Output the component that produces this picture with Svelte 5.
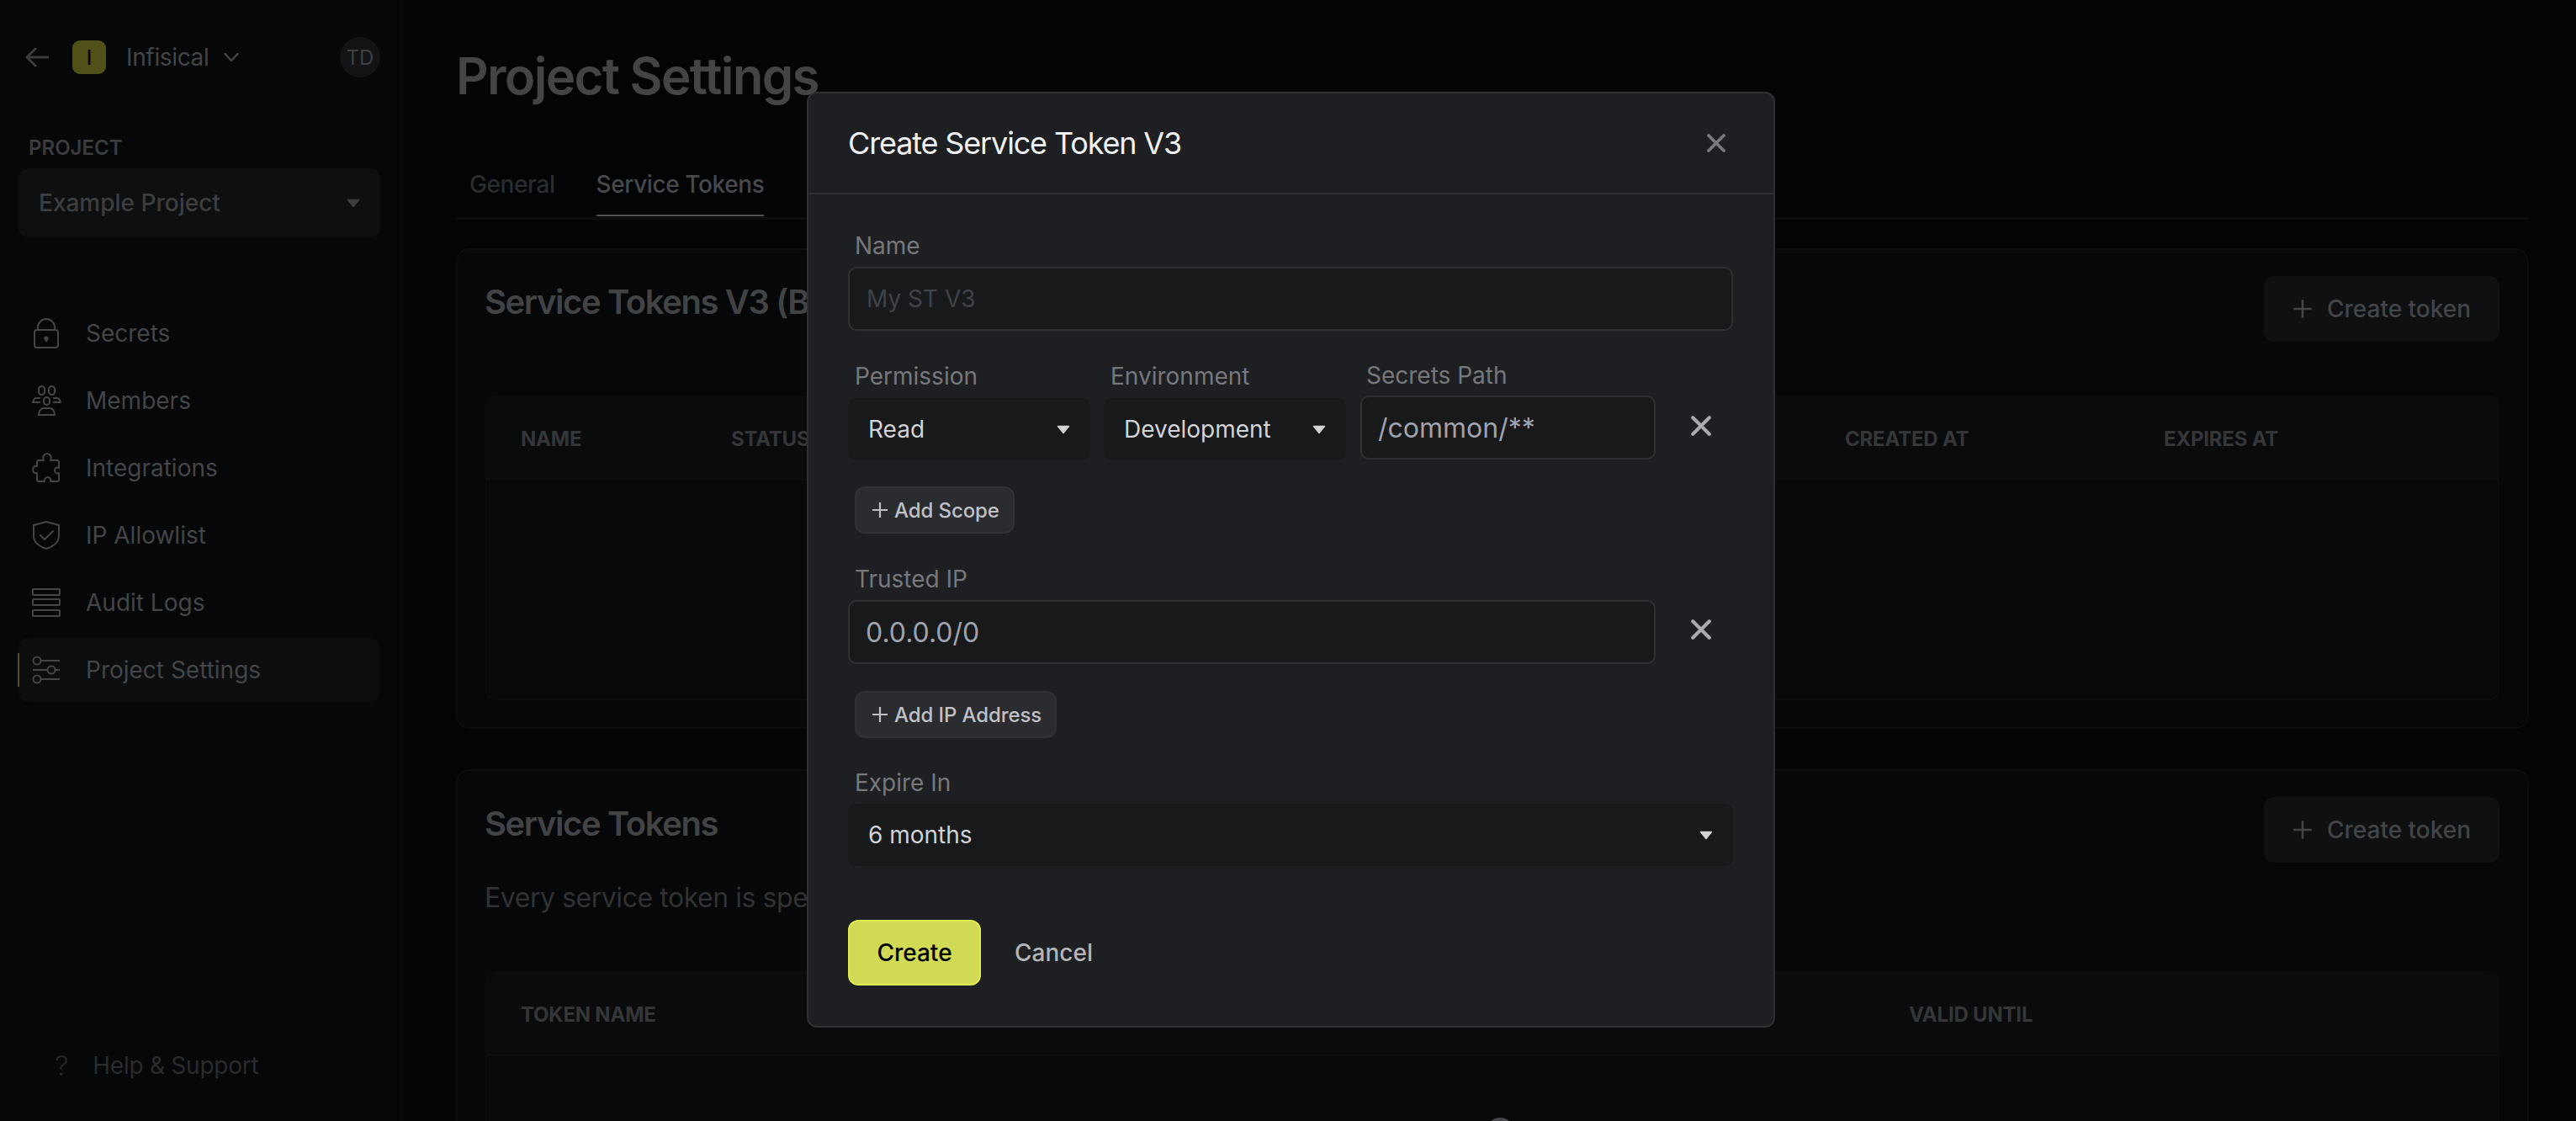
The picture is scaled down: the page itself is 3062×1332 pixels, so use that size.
<script lang="ts">
  const navItems = [
    { label: 'Secrets', icon: 'lock' },
    { label: 'Members', icon: 'users' },
    { label: 'Integrations', icon: 'puzzle' },
    { label: 'IP Allowlist', icon: 'shield' },
    { label: 'Audit Logs', icon: 'rows' },
    { label: 'Project Settings', icon: 'sliders', active: true }
  ];
</script>

{#snippet caret()}
  <svg class="caret" viewBox="0 0 16 11"><path d="M1.5 1.5h13L8 9.5z" fill="currentColor" stroke="currentColor" stroke-width="1.5" stroke-linejoin="round" /></svg>
{/snippet}

{#snippet plus(cls)}
  <svg class={cls} viewBox="0 0 20 20"><path d="M10 1v18M1 10h18" stroke="currentColor" stroke-width="2.2" fill="none" /></svg>
{/snippet}

{#snippet cross(cls)}
  <svg class={cls} viewBox="0 0 20 20"><path d="M2.5 2.5l15 15M17.5 2.5l-15 15" stroke="currentColor" stroke-width="3.2" stroke-linecap="round" fill="none" /></svg>
{/snippet}

<div class="page">
  <aside class="sidebar">
    <div class="org-row">
      <svg class="back" viewBox="0 0 28 24"><path d="M27 12H3M12 2L2 12l10 10" stroke="currentColor" stroke-width="3" fill="none" stroke-linecap="round" stroke-linejoin="round" /></svg>
      <span class="org-logo">I</span>
      <span class="org-name">Infisical</span>
      <svg class="org-chevron" viewBox="0 0 18 12"><path d="M1.5 2L9 10l7.5-8" stroke="currentColor" stroke-width="2.4" fill="none" stroke-linecap="round" stroke-linejoin="round" /></svg>
      <span class="avatar">TD</span>
    </div>

    <div class="project-label">PROJECT</div>
    <div class="project-select">
      <span>Example Project</span>
      {@render caret()}
    </div>

    <nav class="nav">
      {#each navItems as item}
        <div class="nav-item" class:active={item.active}>
          <svg class="nav-icon" viewBox="0 0 36 36" fill="none" stroke="currentColor" stroke-width="2">
            {#if item.icon === 'lock'}
              <rect x="4" y="14" width="28" height="21" rx="3" />
              <path d="M8 14v-3a10 10 0 0 1 20 0v3" />
              <path d="M18 24v3" stroke-width="2.6" stroke-linecap="round" />
              <circle cx="18" cy="24" r="1.6" fill="currentColor" />
            {:else if item.icon === 'users'}
              <rect x="9" y="1" width="7" height="10" rx="3.5" />
              <rect x="21" y="1" width="7" height="10" rx="3.5" />
              <rect x="15" y="14" width="7" height="9" rx="3.5" />
              <path d="M11 15H6c-2 0-3 2-4 5h9" />
              <path d="M26 15h5c2 0 3 2 4 5h-9" />
              <path d="M9 35c0-5 3-8 6-8h7c3 0 6 3 6 8z" />
            {:else if item.icon === 'puzzle'}
              <path d="M15 9c-2-5 1-8 4-8s6 3 4 8h8c1 0 2 1 2 2v7c-3-1-5 0-5 3s2 4 5 3v8c0 1-1 2-2 2h-8c1-3-1-5-3-5s-5 2-4 5H9c-1 0-2-1-2-2v-8c-3 1-5-1-5-4s2-5 5-4v-5c0-1 1-2 2-2z" stroke-linejoin="round" />
            {:else if item.icon === 'shield'}
              <path d="M18 2l15 4v13c0 8-8 13-15 15C11 32 3 27 3 19V6z" stroke-linejoin="round" />
              <path d="M11 18l5 5 10-10" stroke-linecap="round" stroke-linejoin="round" />
            {:else if item.icon === 'rows'}
              <rect x="2" y="2" width="32" height="7" rx="1" />
              <rect x="2" y="14" width="32" height="7" rx="1" />
              <rect x="2" y="27" width="32" height="7" rx="1" />
            {:else}
              <path d="M12 7h22M2 18h17M29 18h5M12 29h22" />
              <circle cx="7" cy="7" r="4.5" />
              <circle cx="24" cy="18" r="4.5" />
              <circle cx="7" cy="29" r="4.5" />
            {/if}
          </svg>
          <span>{item.label}</span>
        </div>
      {/each}
    </nav>

    <div class="help">
      <span class="help-mark">?</span>
      <span>Help &amp; Support</span>
    </div>
  </aside>

  <main class="main">
    <h1>Project Settings</h1>
    <div class="tabs">
      <span class="tab">General</span>
      <span class="tab current">Service Tokens</span>
    </div>

    <section class="card first">
      <div class="card-head">
        <h2>Service Tokens V3 (Beta)</h2>
        <div class="create-btn">{@render plus('create-plus')}<span>Create token</span></div>
      </div>
      <div class="table tall">
        <div class="thead">
          <span style="left: 40px">NAME</span>
          <span style="left: 290px">STATUS</span>
          <span style="left: 1614px">CREATED AT</span>
          <span style="left: 1993px">EXPIRES AT</span>
        </div>
      </div>
    </section>

    <section class="card second">
      <div class="card-head">
        <h2>Service Tokens</h2>
        <div class="create-btn">{@render plus('create-plus')}<span>Create token</span></div>
      </div>
      <p class="card-desc">Every service token is specific to a project and environment.</p>
      <div class="table">
        <div class="thead">
          <span style="left: 40px">TOKEN NAME</span>
          <span style="left: 1690px">VALID UNTIL</span>
        </div>
        <div class="spinner"></div>
      </div>
    </section>
  </main>

  <div class="modal">
    <header class="modal-head">
      <span class="modal-title">Create Service Token V3</span>
      {@render cross('modal-close')}
    </header>

    <div class="modal-body">
      <label class="field-label">Name</label>
      <div class="input placeholder">My ST V3</div>

      <div class="scope-row">
        <div class="scope-col perm">
          <label class="field-label">Permission</label>
          <div class="select"><span>Read</span>{@render caret()}</div>
        </div>
        <div class="scope-col env">
          <label class="field-label">Environment</label>
          <div class="select"><span>Development</span>{@render caret()}</div>
        </div>
        <div class="scope-col path">
          <label class="field-label">Secrets Path</label>
          <div class="input value">/common/**</div>
        </div>
        {@render cross('row-close scope-close')}
      </div>

      <div class="add-btn first-add">{@render plus('add-plus')}<span>Add Scope</span></div>

      <label class="field-label trusted">Trusted IP</label>
      <div class="ip-row">
        <div class="input value">0.0.0.0/0</div>
        {@render cross('row-close')}
      </div>

      <div class="add-btn">{@render plus('add-plus')}<span>Add IP Address</span></div>

      <label class="field-label expire">Expire In</label>
      <div class="select wide"><span>6 months</span>{@render caret()}</div>

      <div class="actions">
        <span class="primary">Create</span>
        <span class="cancel">Cancel</span>
      </div>
    </div>
  </div>
</div>

<style>
  :global(body) {
    margin: 0;
    background: #030405;
  }

  .page {
    position: relative;
    width: 3062px;
    height: 1332px;
    overflow: hidden;
    display: flex;
    font-family: Inter, "Liberation Sans", sans-serif;
    background: #030405;
  }

  /* sidebar */
  .sidebar {
    width: 477px;
    flex-shrink: 0;
    border-right: 2px solid #0a0b0c;
    background: #060708;
    display: flex;
    flex-direction: column;
    color: #434547;
  }

  .org-row {
    display: flex;
    align-items: center;
    height: 48px;
    margin-top: 44px;
    padding-left: 30px;
    width: 422px;
  }

  .back {
    width: 28px;
    height: 24px;
    color: #3a3c3e;
  }

  .org-logo {
    width: 40px;
    height: 40px;
    margin-left: 28px;
    border-radius: 9px;
    background: #4f5119;
    color: #050505;
    font-size: 24px;
    font-weight: 500;
    display: flex;
    align-items: center;
    justify-content: center;
  }

  .org-name {
    margin-left: 24px;
    font-size: 28px;
    letter-spacing: -0.35px;
  }

  .org-chevron {
    width: 18px;
    height: 12px;
    margin-left: 18px;
    color: #434547;
  }

  .avatar {
    width: 48px;
    height: 48px;
    margin-left: auto;
    border-radius: 50%;
    background: #111315;
    color: #3f4143;
    font-size: 24px;
    display: flex;
    align-items: center;
    justify-content: center;
  }

  .project-label {
    margin: 70px 0 0 34px;
    font-size: 24px;
    font-weight: 600;
    line-height: 28px;
    color: #3a3c3e;
  }

  .project-select {
    margin: 10px 25px 0 22px;
    height: 82px;
    padding: 0 24px 0 24px;
    border-radius: 12px;
    background: #0d0f10;
    display: flex;
    align-items: center;
    justify-content: space-between;
    font-size: 28px;
    font-weight: 500;
    color: #3c3e40;
  }

  .caret {
    width: 16px;
    height: 11px;
    flex-shrink: 0;
  }

  .nav {
    margin-top: 76px;
    display: flex;
    flex-direction: column;
    gap: 4px;
  }

  .nav-item {
    position: relative;
    height: 76px;
    margin: 0 25px 0 22px;
    padding-left: 15px;
    border-radius: 12px;
    display: flex;
    align-items: center;
    gap: 29px;
    font-size: 28px;
    color: #434547;
  }

  .nav-item.active {
    background: #0b0d0e;
  }

  .nav-item.active::before {
    content: '';
    position: absolute;
    left: -1px;
    top: 18px;
    width: 2px;
    height: 40px;
    background: #4f5119;
  }

  .nav-icon {
    width: 36px;
    height: 36px;
    color: #434547;
  }

  .help {
    margin-top: auto;
    margin-bottom: 52px;
    padding-left: 65px;
    display: flex;
    align-items: center;
    gap: 29px;
    font-size: 28px;
    letter-spacing: -0.25px;
    color: #2a2b2d;
    line-height: 28px;
  }

  .help-mark {
    font-size: 33px;
    font-weight: 300;
    color: #252728;
  }

  /* page behind the dialog */
  .main {
    flex: 1;
    padding: 0 56px 0 63px;
    min-width: 0;
  }

  h1 {
    margin: 0;
    padding-top: 54px;
    font-size: 60px;
    line-height: 72px;
    font-weight: 600;
    letter-spacing: -1.7px;
    color: #424446;
  }

  .tabs {
    display: flex;
    gap: 49px;
    height: 135px;
    padding: 0 0 0 16px;
    box-sizing: border-box;
    border-bottom: 3px solid #0b0c0d;
    align-items: flex-end;
  }

  .tab {
    font-size: 28px;
    font-weight: 500;
    line-height: 34px;
    letter-spacing: -0.4px;
    color: #2a2c2e;
    padding-bottom: 21px;
    margin-bottom: 1px;
  }

  .tab.current {
    color: #47494b;
    border-bottom: 2px solid #4f5153;
    padding-bottom: 19px;
  }

  .card {
    position: relative;
    margin-top: 34px;
    height: 571px;
    box-sizing: border-box;
    padding: 31px 33px 0;
    border: 2px solid #0c0d0e;
    border-radius: 16px;
    background: #060708;
  }

  .card.second {
    margin-top: 48px;
    height: 500px;
  }

  .card-head {
    display: flex;
    justify-content: space-between;
    align-items: flex-start;
    height: 142px;
  }

  h2 {
    margin: 0 0 0 -1px;
    padding-top: 7px;
    font-size: 40px;
    line-height: 48px;
    font-weight: 600;
    letter-spacing: -1.4px;
    color: #414345;
  }

  .second .card-head {
    height: auto;
  }

  .second h2 {
    padding-top: 8px;
  }

  .create-btn {
    width: 280px;
    height: 78px;
    border-radius: 12px;
    background: #0e1011;
    display: flex;
    align-items: center;
    justify-content: center;
    gap: 17px;
    font-size: 28px;
    font-weight: 500;
    color: #434547;
  }

  :global(.create-plus) {
    width: 24px;
    height: 24px;
  }

  .card-desc {
    margin: 22px 0 0 -1px;
    font-size: 32px;
    line-height: 40px;
    letter-spacing: -0.45px;
    color: #303234;
  }

  .table {
    position: relative;
    box-sizing: border-box;
    height: 362px;
    border: 2px solid #0b0c0d;
    border-radius: 12px;
    background: #07080a;
  }

  .second .table {
    margin-top: 67px;
    height: 400px;
  }

  .thead {
    position: relative;
    height: 96px;
    border-bottom: 3px solid #0d0e0f;
    background: #0a0b0c;
    border-radius: 12px 12px 0 0;
  }

  .thead span {
    position: absolute;
    top: 36px;
    font-size: 24px;
    line-height: 28px;
    font-weight: 700;
    letter-spacing: -0.2px;
    color: #343638;
  }

  .spinner {
    position: absolute;
    left: 1187px;
    top: 172px;
    width: 34px;
    height: 34px;
    box-sizing: border-box;
    border-radius: 50%;
    border: 6px solid #45474a;
  }

  /* dialog */
  .modal {
    position: absolute;
    left: 959px;
    top: 109px;
    width: 1151px;
    height: 1112px;
    box-sizing: border-box;
    border: 2px solid #2e3034;
    border-radius: 12px;
    background: #1e1f22;
    color: #d5d6d8;
  }

  .modal-head {
    height: 118px;
    padding: 0 56px 0 47px;
    border-bottom: 2px solid #2e3034;
    display: flex;
    align-items: center;
    justify-content: space-between;
  }

  .modal-title {
    font-size: 36px;
    font-weight: 400;
    letter-spacing: -1.15px;
    color: #f0f1f2;
  }

  :global(.modal-close) {
    width: 24px;
    height: 24px;
    color: #77797d;
  }

  .modal-body {
    padding: 43px 48px 0 47px;
    display: flex;
    flex-direction: column;
    align-items: flex-start;
  }

  .field-label {
    display: block;
    margin-left: 8px;
    font-size: 28px;
    line-height: 36px;
    color: #76787c;
  }

  .input {
    box-sizing: border-box;
    width: 100%;
    height: 76px;
    margin-top: 7px;
    padding: 0 19px;
    border: 2px solid #2e3034;
    border-radius: 10px;
    background: #18191b;
    display: flex;
    align-items: center;
    font-size: 32px;
    color: #9ea3af;
  }

  .input.placeholder {
    padding: 0 20px;
    font-size: 28px;
    color: #3f4249;
  }

  .scope-row {
    display: flex;
    align-items: flex-end;
    margin-top: 35px;
    width: 100%;
  }

  .perm {
    width: 288px;
  }

  .env {
    width: 288px;
    margin-left: 16px;
  }

  .path {
    width: 351px;
    margin-left: 17px;
  }

  .path .field-label {
    margin-left: 7px;
  }

  .path .input {
    margin-top: 6px;
    margin-bottom: 1px;
  }

  .select {
    box-sizing: border-box;
    height: 74px;
    margin-top: 8px;
    padding: 0 24px;
    border-radius: 10px;
    background: #18191b;
    display: flex;
    align-items: center;
    justify-content: space-between;
    font-size: 28px;
    color: #d2d3d6;
  }

  .select.wide {
    width: 100%;
    margin-top: 7px;
  }

  :global(.row-close) {
    width: 26px;
    height: 26px;
    margin-left: 41px;
    flex-shrink: 0;
    color: #a9abb0;
  }

  :global(.scope-close) {
    margin-bottom: 28px;
  }

  .add-btn {
    box-sizing: border-box;
    height: 56px;
    margin: 32px 0 0 8px;
    padding: 0 16px 0 18px;
    border: 2px solid #303236;
    border-radius: 12px;
    background: #2b2c30;
    display: flex;
    align-items: center;
    gap: 7px;
    font-size: 24px;
    font-weight: 500;
    letter-spacing: -0.1px;
    color: #bfc1c6;
  }

  .add-btn.first-add {
    margin-top: 31px;
  }

  :global(.add-plus) {
    width: 20px;
    height: 20px;
  }

  .trusted {
    margin-top: 36px;
  }

  .expire {
    margin-top: 35px;
  }

  .ip-row {
    display: flex;
    align-items: center;
    width: 100%;
  }

  .ip-row .input {
    width: 960px;
  }

  .actions {
    display: flex;
    align-items: center;
    margin-top: 64px;
    gap: 40px;
  }

  .primary {
    box-sizing: border-box;
    width: 158px;
    height: 78px;
    border: 2px solid #e0e854;
    border-radius: 12px;
    background: #d1da55;
    color: #000;
    display: flex;
    align-items: center;
    justify-content: center;
    font-size: 28px;
    font-weight: 500;
  }

  .cancel {
    font-size: 28px;
    font-weight: 500;
    color: #b3b5b9;
  }
</style>
